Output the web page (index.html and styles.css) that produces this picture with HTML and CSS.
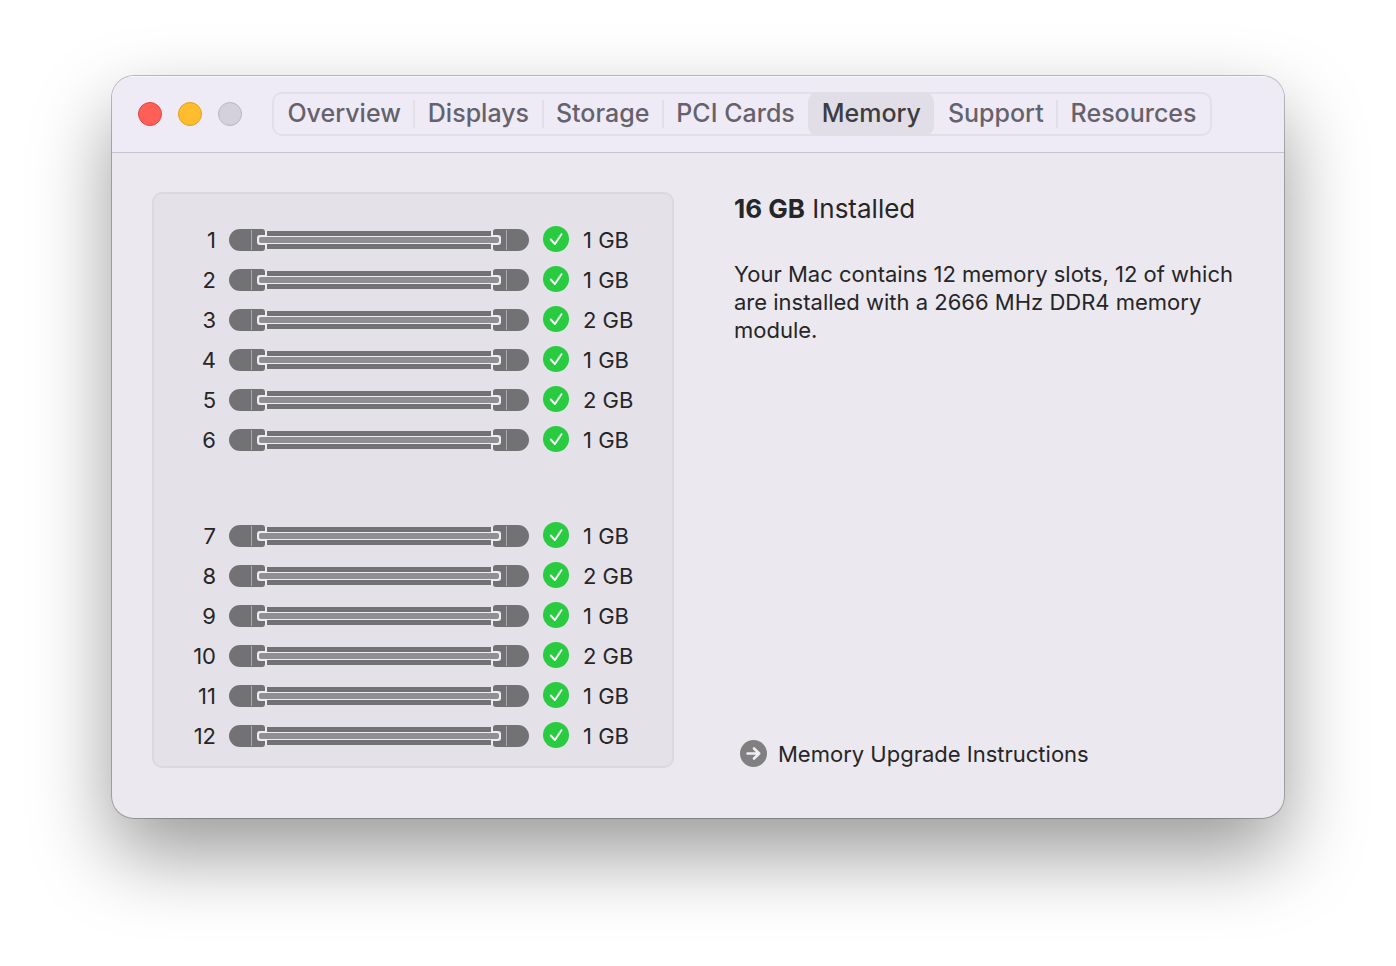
FILE: index.html
```html
<!DOCTYPE html>
<html lang="en">
<head>
    <meta charset="UTF-8">
    <meta name="viewport" content="width=device-width, initial-scale=1.0">
    <title>About This Mac - Memory</title>
    <link rel="stylesheet" href="styles.css">
</head>
<body>
    <main class="window">
        <header class="titlebar">
            <div class="controls">
                <button type="button" class="control close" aria-label="Close"></button>
                <button type="button" class="control minimize" aria-label="Minimize"></button>
                <button type="button" class="control zoom" aria-label="Zoom" disabled></button>
            </div>
            <nav class="tabs">
                <button type="button" class="tab">Overview</button>
                <button type="button" class="tab">Displays</button>
                <button type="button" class="tab">Storage</button>
                <button type="button" class="tab">PCI Cards</button>
                <button type="button" class="tab active">Memory</button>
                <button type="button" class="tab">Support</button>
                <button type="button" class="tab">Resources</button>
            </nav>
        </header>

        <div class="content">
            <section class="slots" id="slots" aria-label="Memory slots"></section>

            <section class="details">
                <h1><strong>16 GB</strong> Installed</h1>
                <p>Your Mac contains 12 memory slots, 12 of which are installed with a 2666 MHz DDR4 memory module.</p>
                <a class="upgrade" href="#">
                    <svg width="27" height="28" viewBox="0 0 27 28" aria-hidden="true">
                        <circle cx="13.5" cy="13.5" r="13.5" fill="#808080"/>
                        <path d="M7.5 13.5H19M14 8.5l5.2 5-5.2 5" fill="none" stroke="#f0eef3" stroke-width="2.6" stroke-linecap="round" stroke-linejoin="round"/>
                    </svg>
                    <span>Memory Upgrade Instructions</span>
                </a>
            </section>
        </div>
    </main>

    <svg class="symbols" aria-hidden="true">
        <symbol id="dimm" viewBox="0 0 300 22">
            <!-- end clips -->
            <path d="M11 0H33a3 3 0 0 1 3 3V19a3 3 0 0 1-3 3H11A11 11 0 0 1 11 0Z" fill="#727274"/>
            <path d="M289 0H267a3 3 0 0 0-3 3V19a3 3 0 0 0 3 3H289A11 11 0 0 0 289 0Z" fill="#727274"/>
            <path d="M22.5 1V21M277.5 1V21" stroke="#a9a9ab"/>
            <!-- module -->
            <path d="M36 2h2V20h-2ZM262 2h2V20h-2Z" fill="#eeecf1"/>
            <rect x="38" y="2" width="224" height="18" fill="#727274"/>
            <rect x="28" y="6" width="11" height="10" rx="3" fill="#eeecf1"/>
            <rect x="261" y="6" width="11" height="10" rx="3" fill="#eeecf1"/>
            <path d="M38 6H262V16H38Z" fill="#727274"/>
            <path d="M36 7H264V15H36Z" fill="#eeecf1"/>
            <rect x="30" y="8" width="240" height="6" rx="2" fill="#8f8e93"/>
        </symbol>
        <symbol id="check" viewBox="0 0 26 28">
            <circle cx="13" cy="13" r="13" fill="#29cc41"/>
            <path d="M7.8 13.5l4.1 4.5L18.5 8.2" fill="none" stroke="#f2fff3" stroke-width="2" stroke-linecap="round" stroke-linejoin="round"/>
        </symbol>
    </svg>

    <script>
        // Module size in GB per slot, one array per bank
        const banks = [
            [1, 1, 2, 1, 2, 1],
            [1, 2, 1, 2, 1, 1]
        ];

        const slots = document.getElementById('slots');
        let slot = 1;

        banks.forEach(bank => {
            const table = document.createElement('table');
            table.className = 'bank';
            bank.forEach(size => {
                const row = table.insertRow();
                row.innerHTML = `
                    <th scope="row">${slot}</th>
                    <td class="module"><svg width="300" height="22"><use href="#dimm"/></svg></td>
                    <td class="status"><svg width="26" height="28" role="img" aria-label="OK"><use href="#check"/></svg></td>
                    <td class="size">${size} GB</td>
                `;
                slot++;
            });
            slots.appendChild(table);
        });
    </script>
</body>
</html>
```
FILE: styles.css
```css
* {
    box-sizing: border-box;
}
body {
    min-height: 100vh;
    margin: 0;
    padding: 76px 112px 148px;
    background: #fff;
    color: #262527;
    font-family: Inter, "Liberation Sans", sans-serif;
    font-size: 22px;
    line-height: 28px;
}
.window {
    border-radius: 22px;
    background: #ebe8ef;
    overflow: hidden;
    box-shadow: 0 0 0 1px rgba(0, 0, 0, 0.24), 0 36px 80px rgba(0, 0, 0, 0.4);
}
.titlebar {
    display: flex;
    align-items: center;
    gap: 30px;
    height: 77px;
    padding: 0 72px 0 26px;
    background: #efebf6;
    border-bottom: 1px solid #c6c3cb;
    box-shadow: inset 0 1px #f8f6fb;
}
.controls {
    display: flex;
    gap: 16px;
}
.control {
    width: 24px;
    height: 24px;
    padding: 0;
    border: 1px solid;
    border-radius: 50%;
}
.close {
    background: #ff5f57;
    border-color: #e2463f;
}
.minimize {
    background: #febc2e;
    border-color: #e1a116;
}
.zoom {
    background: #d4d1dc;
    border-color: #bab7c1;
}
.tabs {
    display: flex;
    flex: 1;
    height: 44px;
    border: 2px solid #e2dfe8;
    border-radius: 10px;
}
.tab {
    position: relative;
    flex: 1 1 auto;
    padding: 0 0 2px;
    border: 0;
    background: none;
    color: #65626c;
    font-family: inherit;
    font-size: 25px;
    font-weight: 500;
    line-height: 32px;
    white-space: nowrap;
}
.tab + .tab::before {
    content: "";
    position: absolute;
    left: -1px;
    top: 6px;
    bottom: 6px;
    width: 2px;
    background: #e2dfe8;
}
.tab.active {
    margin: -2px 0;
    border-radius: 10px;
    background: #e1dee7;
    color: #3d3c40;
}
.tab.active::before,
.tab.active + .tab::before {
    display: none;
}
.content {
    display: flex;
    gap: 60px;
    padding: 39px 40px 50px;
}
.slots {
    padding: 26px 38px 10px 28px;
    border: 2px solid #dbd9df;
    border-radius: 10px;
    background: #e4e2e8;
}
.bank {
    border-collapse: collapse;
}
.bank + .bank {
    margin-top: 56px;
}
.bank tr {
    height: 40px;
}
.bank th,
.bank td {
    padding: 0;
    font-weight: 400;
}
.bank th {
    width: 34px;
    text-align: right;
}
.bank svg {
    display: block;
}
.bank .module {
    padding-left: 13px;
}
.bank .status,
.bank .size {
    padding-left: 14px;
}
.bank .size {
    width: 65px;
    white-space: nowrap;
}
.details {
    display: flex;
    flex: 1;
    flex-direction: column;
}
h1 {
    margin: 0 0 34px;
    font-size: 26px;
    font-weight: 400;
    line-height: 34px;
}
.details p {
    margin: 0;
}
.upgrade {
    display: flex;
    align-items: center;
    gap: 11px;
    margin-top: auto;
    padding-left: 6px;
    color: inherit;
    text-decoration: none;
}
.symbols {
    display: none;
}
```
